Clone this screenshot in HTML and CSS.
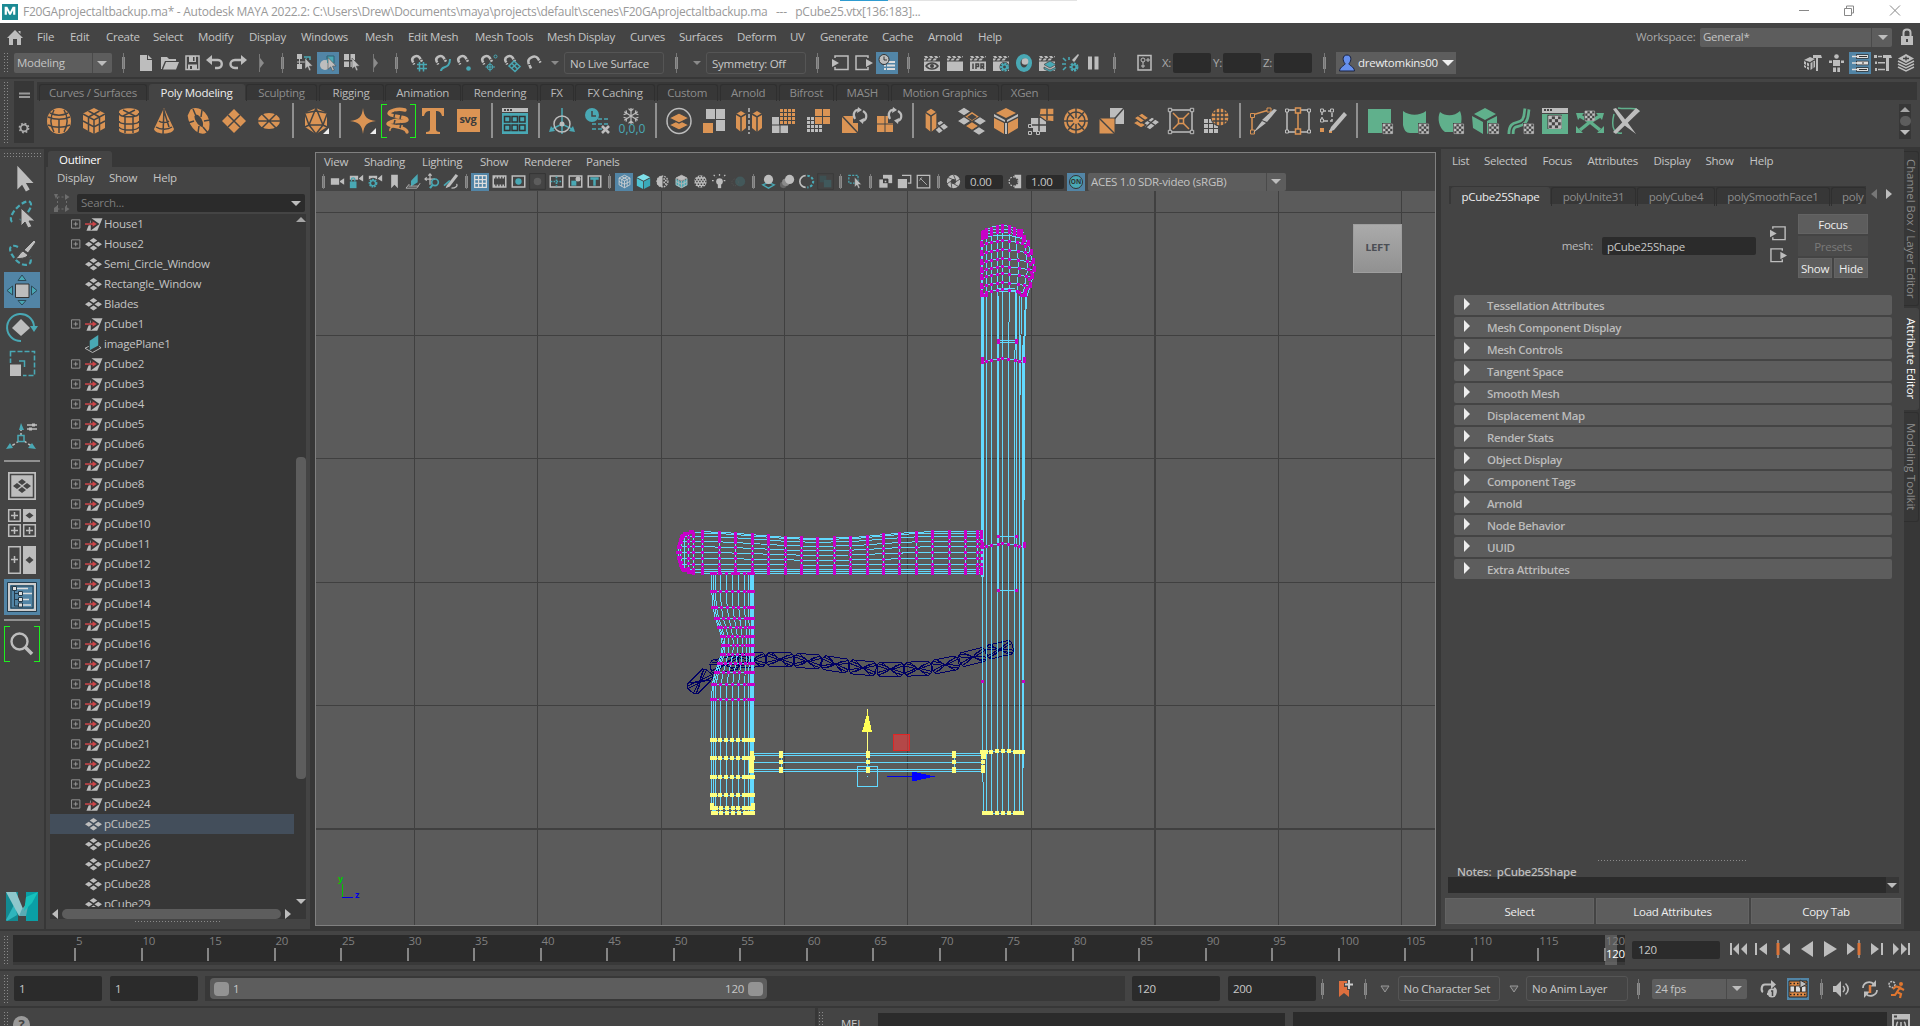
FILE: index.html
```html
<!DOCTYPE html>
<html lang="en">
<head>
<meta charset="utf-8">
<title>Autodesk MAYA 2022.2</title>
<link rel="stylesheet" href="styles.css">
</head>
<body>
<header class="titlebar">
  <i data-icon="app" class="app-icon"></i>
  <span class="title">F20GAprojectaltbackup.ma* - Autodesk MAYA 2022.2: C:\Users\Drew\Documents\maya\projects\default\scenes\F20GAprojectaltbackup.ma&nbsp;&nbsp; ---&nbsp;&nbsp; pCube25.vtx[136:183]...</span>
  <div class="progress"></div>
  <div class="winbtns"><i data-icon="min"></i><i data-icon="restore"></i><i data-icon="close"></i></div>
</header>

<nav class="menubar">
  <i data-icon="home"></i>
  <span>File</span><span>Edit</span><span>Create</span><span>Select</span><span>Modify</span><span>Display</span><span>Windows</span><span>Mesh</span><span>Edit Mesh</span><span>Mesh Tools</span><span>Mesh Display</span><span>Curves</span><span>Surfaces</span><span>Deform</span><span>UV</span><span>Generate</span><span>Cache</span><span>Arnold</span><span>Help</span>
  <span class="dim">Workspace:</span>
  <div class="combo ws"><span>General*</span><b class="down"></b></div>
  <i data-icon="lock"></i>
</nav>

<div class="status">
  <b class="grip"></b>
  <div class="combo modeling"><span>Modeling</span><b class="down"></b></div>
  <b class="sep"></b>
  <i data-icon="newf"></i><i data-icon="open"></i><i data-icon="save"></i><i data-icon="undo"></i><i data-icon="redo"></i>
  <i data-icon="chev"></i><b class="sep"></b>
  <i data-icon="selh"></i><i data-icon="selo" class="on"></i><i data-icon="selc"></i>
  <i data-icon="chev"></i><b class="sep"></b>
  <i data-icon="mag1"></i><i data-icon="mag2"></i><i data-icon="mag3"></i><i data-icon="mag4"></i><i data-icon="mag5"></i><i data-icon="mag6"></i>
  <b class="down small"></b>
  <div class="outbox">No Live Surface</div>
  <b class="sep"></b><b class="down small"></b>
  <div class="outbox">Symmetry: Off</div>
  <b class="sep"></b>
  <i data-icon="inp"></i><i data-icon="outp"></i><i data-icon="hist" class="on"></i>
  <b class="sep"></b>
  <i data-icon="r1"></i><i data-icon="r2"></i><i data-icon="r3"></i><i data-icon="r4"></i><i data-icon="r5"></i><i data-icon="r6"></i><i data-icon="r7"></i><i data-icon="pause"></i>
  <b class="sep"></b>
  <i data-icon="xyz"></i>
  <span class="dim">X:</span><div class="field num"></div><span class="dim">Y:</span><div class="field num"></div><span class="dim">Z:</span><div class="field num"></div>
  <b class="sep"></b>
  <div class="user"><i data-icon="user"></i><span>drewtomkins00</span><b class="down white"></b></div>
  <i data-icon="p1"></i><i data-icon="p2"></i><i data-icon="p3" class="on"></i><i data-icon="p4"></i><i data-icon="p5"></i>
</div>

<section class="shelf">
  <b class="grip tall"></b>
  <div class="shelf-side"><i data-icon="burger"></i><i data-icon="cog"></i></div>
  <div class="shelf-main">
    <div class="tabs shelf-tabs">
      <span>Curves / Surfaces</span><span class="active">Poly Modeling</span><span>Sculpting</span><span class="lit">Rigging</span><span class="lit">Animation</span><span class="lit">Rendering</span><span class="lit">FX</span><span class="lit">FX Caching</span><span>Custom</span><span>Arnold</span><span>Bifrost</span><span>MASH</span><span>Motion Graphics</span><span>XGen</span>
    </div>
    <div class="shelf-icons">
      <i data-icon="sphere"></i><i data-icon="cube"></i><i data-icon="cyl"></i><i data-icon="cone"></i><i data-icon="torus"></i><i data-icon="plane"></i><i data-icon="disc"></i><hr>
      <i data-icon="plat"></i><hr>
      <i data-icon="star"></i><i data-icon="helix" class="bracket"></i><i data-icon="type"></i><div class="svgtile"><span>svg</span></div><hr>
      <i data-icon="content"></i><hr>
      <i data-icon="locator"></i><i data-icon="delhist"></i><div class="freeze"><i data-icon="snow"></i><span>0,0,0</span></div><hr>
      <i data-icon="boolean"></i><i data-icon="combine"></i><i data-icon="mirror"></i><i data-icon="smooth"></i><i data-icon="reduce"></i><i data-icon="rot1"></i><i data-icon="rot2"></i><hr>
      <i data-icon="extrude"></i><i data-icon="bridge"></i><i data-icon="bevel"></i><i data-icon="merge"></i><i data-icon="circ"></i><i data-icon="flip"></i><i data-icon="dup"></i><i data-icon="poke"></i><i data-icon="sphproj"></i><hr>
      <i data-icon="cut"></i><i data-icon="loop"></i><i data-icon="quad"></i><hr>
      <i data-icon="uv1"></i><i data-icon="uv2"></i><i data-icon="uv3"></i><i data-icon="uv4"></i><i data-icon="uv5"></i><i data-icon="uv6"></i><i data-icon="uv7"></i><i data-icon="uv8"></i>
    </div>
  </div>
  <div class="shelf-scroll"><b class="up"></b><u></u><b class="down"></b></div>
</section>

<main>
  <aside class="toolbox">
    <b class="griph"></b>
    <i data-icon="tsel"></i><i data-icon="tlasso"></i><i data-icon="tpaint"></i><i data-icon="tmove" class="on"></i><i data-icon="trot"></i><i data-icon="tscale"></i>
    <b></b><i data-icon="tman"></i><hr>
    <i data-icon="lay1"></i><i data-icon="lay4"></i><i data-icon="lay2"></i><i data-icon="layo" class="on"></i><hr>
    <i data-icon="tsearch" class="bracket"></i><b></b><i data-icon="maya"></i>
  </aside>

  <section class="outliner">
    <div class="otab">Outliner</div>
    <div class="obody">
      <div class="omenu"><span>Display</span><span>Show</span><span>Help</span></div>
      <div class="osearch"><i data-icon="frame"></i><div class="field"><span>Search...</span><b class="down"></b></div></div>
      <div class="olist">
        <div class="rows" id="rows"></div>
        <div class="vscroll"><b class="up"></b><u></u><b class="down"></b></div>
        <div class="hscroll"><b class="left"></b><u></u><b class="right"></b></div>
      </div>
      <div class="dots"></div>
    </div>
  </section>

  <section class="view">
    <div class="vmenu"><span>View</span><span>Shading</span><span>Lighting</span><span>Show</span><span>Renderer</span><span>Panels</span></div>
    <div class="vbar">
      <b class="sep"></b><i data-icon="v1"></i><i data-icon="v2"></i><i data-icon="v3"></i><i data-icon="v4"></i><i data-icon="v5"></i><i data-icon="v6"></i><i data-icon="v7"></i>
      <b class="sep"></b><i data-icon="v8" class="on"></i><i data-icon="v9"></i><i data-icon="v10"></i><i data-icon="v11"></i><i data-icon="v12"></i><i data-icon="v13"></i><i data-icon="v14"></i>
      <b class="sep wide"></b><i data-icon="v15" class="on"></i><i data-icon="v16"></i><i data-icon="v17"></i><i data-icon="v18"></i><i data-icon="v19"></i><i data-icon="v20"></i><i data-icon="v21"></i>
      <b class="sep wide"></b><i data-icon="v22"></i><i data-icon="v23"></i><i data-icon="v24"></i><i data-icon="v25"></i>
      <b class="sep wide"></b><i data-icon="v26"></i><b class="sep wide"></b><i data-icon="v27"></i><i data-icon="v28"></i><i data-icon="v29"></i>
      <b class="sep wide"></b><i data-icon="v30"></i><div class="field">0.00</div><i data-icon="v31"></i><div class="field">1.00</div>
      <div class="onbtn"><span>ON</span></div>
      <div class="combo cs"><span>ACES 1.0 SDR-video (sRGB)</span><b class="down"></b></div>
    </div>
    <div class="canvas">
      <svg id="scene" viewBox="316 191 1119 734" width="1119" height="734"></svg>
      <div class="viewcube">LEFT</div>
    </div>
  </section>

  <section class="attr">
    <div class="amenu"><span>List</span><span>Selected</span><span>Focus</span><span>Attributes</span><span>Display</span><span>Show</span><span>Help</span></div>
    <div class="atabrow">
      <div class="tabs atabs"><span class="active">pCube25Shape</span><span>polyUnite31</span><span>polyCube4</span><span>polySmoothFace1</span><span class="cut">poly</span></div>
      <b class="left faint"></b><b class="right"></b>
    </div>
    <div class="ahead">
      <label>mesh:</label><div class="field">pCube25Shape</div>
      <div class="io"><i data-icon="inp"></i><i data-icon="outp"></i></div>
      <div class="abtns"><button>Focus</button><button class="off">Presets</button><button>Show</button><button>Hide</button></div>
    </div>
    <div class="sections">
      <div>Tessellation Attributes</div><div>Mesh Component Display</div><div>Mesh Controls</div><div>Tangent Space</div><div>Smooth Mesh</div><div>Displacement Map</div><div>Render Stats</div><div>Object Display</div><div>Component Tags</div><div>Arnold</div><div>Node Behavior</div><div>UUID</div><div>Extra Attributes</div>
    </div>
    <div class="notes">
      <div class="dots"></div>
      <div class="nlabel">Notes:&nbsp; pCube25Shape</div>
      <div class="nfield"><b class="down"></b></div>
      <div class="nbtns"><button>Select</button><button>Load Attributes</button><button>Copy Tab</button></div>
    </div>
  </section>
  <aside class="vtabs"><span class="t1">Channel Box / Layer Editor</span><span class="t2 active">Attribute Editor</span><span class="t3">Modeling Toolkit</span></aside>
</main>

<section class="timeline">
  <b class="grip"></b>
  <div class="ruler" id="ruler"></div>
  <div class="field frame">120</div>
  <div class="play"><i data-icon="k1"></i><i data-icon="k2"></i><i data-icon="k3"></i><i data-icon="k4"></i><i data-icon="k5"></i><i data-icon="k6"></i><i data-icon="k7"></i><i data-icon="k8"></i></div>
</section>

<section class="range">
  <b class="grip"></b>
  <div class="field">1</div><div class="field">1</div>
  <div class="track"><div class="thumb"><u></u><span>1</span><span>120</span><u></u></div></div>
  <div class="field">120</div><div class="field">200</div>
  <b class="sep"></b><i data-icon="bookmark"></i><b class="sep"></b>
  <i data-icon="tri"></i><div class="outbox">No Character Set</div>
  <i data-icon="tri"></i><div class="outbox">No Anim Layer</div>
  <b class="sep"></b>
  <div class="combo fps"><span>24 fps</span><b class="down"></b></div>
  <i data-icon="once"></i><i data-icon="film" class="on"></i><b class="sep"></b>
  <i data-icon="speaker"></i><i data-icon="refresh"></i><i data-icon="runner"></i>
</section>

<footer class="cmd">
  <b class="grip"></b><i class="help">?</i><div class="helpline"></div>
  <b class="grip"></b><span>MEL</span><div class="mel"></div><div class="mel result"></div><i data-icon="script"></i>
</footer>
<script src="app.js"></script>
</body>
</html>
```

FILE: styles.css
```css
* { box-sizing: border-box; }
body {
  margin: 0; width: 1920px; height: 1026px; overflow: hidden;
  display: flex; flex-direction: column;
  background: #444; color: #c4c4c4;
  font: 11.5px/16px "Open Sans", "Noto Sans", sans-serif; letter-spacing: -0.27px;
  white-space: nowrap;
}
i { display: block; font-style: normal; }
b, u { display: block; text-decoration: none; }
svg { display: block; }
button { font: inherit; letter-spacing: inherit; color: #eee; background: #5d5d5d; border: 1px solid #636363; padding: 1px 0 0; text-align: center; }

/* icon palette: fills and strokes */
.g { fill: #bdbdbd; } .o { fill: #db9454; } .t { fill: #49a8b4; } .n { fill: #60b08c; } .d { fill: #444; } .w { fill: #eee; }
.G, .O, .T, .N, .D { fill: none; stroke-width: 1.5; }
.G { stroke: #bdbdbd; } .O { stroke: #db9454; } .T { stroke: #49a8b4; } .N { stroke: #60b08c; } .D { stroke: #444; }
.thick { stroke-width: 2.6; } .thin { stroke-width: 1; }

.down, .up, .left, .right { width: 0; height: 0; border: 0 solid transparent; flex: none; }
.down { border-width: 5px 5px 0; border-top-color: #bdbdbd; }
.down.small { border-width: 4px 4px 0; border-top-color: #8a8a8a; justify-self: center; margin-right: 3px; }
.down.white { border-width: 6px 6px 0; border-top-color: #eee; }
.up { border-width: 0 5px 5px; border-bottom-color: #a5a5a5; }
.left { border-width: 5px 6px 5px 0; border-right-color: #bdbdbd; }
.left.faint { border-right-color: #777; }
.right { border-width: 5px 0 5px 6px; border-left-color: #bdbdbd; }
.on { background: #5285a6; }
.dim { color: #aaa; }
.grip { width: 5px; height: 22px; background: radial-gradient(circle, #8a8a8a 0.6px, transparent 0.9px) 0 0 / 3px 3px; }
.sep { width: 4px; height: 20px; background: linear-gradient(#777, #777) center / 1px 100% no-repeat, linear-gradient(#8b8b8b, #8b8b8b) center / 3px 12px no-repeat; }
.field { background: #2b2b2b; border-radius: 2px; color: #c8c8c8; }
.outbox { border: 1px solid #555; border-radius: 3px; width: 100px; height: 22px; line-height: 21px; padding-left: 5px; color: #c8c8c8; }
.combo { background: #5d5d5d; border-radius: 2px; display: flex; align-items: center; justify-content: space-between; padding: 0 5px 0 3px; }
.dots { height: 1px; background: repeating-linear-gradient(90deg, #8a8a8a 0 1px, transparent 1px 3px); }

.titlebar { height: 23px; background: #fff; display: grid; grid-template-columns: 20px 817px 240px 1fr auto; position: relative; flex: none; }
.app-icon { width: 14px; margin: 4px 0 0 2px; }
.title { font: 12px/23px "Open Sans", sans-serif; color: #999; letter-spacing: -0.27px; padding-left: 3px; }
.progress { height: 1px; margin-left: 3px; background: linear-gradient(90deg, #2e9bd0 48px, #e3e3e3 48px); }
.winbtns { grid-column: 5; display: grid; grid-template-columns: 46px 45px 29px; padding: 4px 0 0; width: 124px; }

.menubar { height: 28px; display: grid; align-items: center; flex: none; padding-left: 6px;
  grid-template-columns: 31px 33px 36px 47px 45px 51px 52px 64px 43px 67px 72px 83px 49px 58px 53px 30px 62px 46px 50px 658px 64px 199px 20px; }
.menubar > .combo { width: 192px; height: 19px; padding-right: 4px; background: linear-gradient(90deg, transparent 171px, #4a4a4a 171px 172px, transparent 172px) #5d5d5d; }

.status { height: 26px; display: grid; align-items: center; flex: none; padding: 0 0 2px 3px;
  grid-template-columns: 11px 107px 17px 23px 23px 22px 23px 28px 23px 16px 21px 26px 28px 23px 16px 24px 22px 24px 23px 23px 23px 15px 110px 17px 15px 109px 17px 23px 21px 30px 17px 23px 23px 23px 23px 23px 24px 22px 28px 24px 26px 11px 40px 10px 40px 11px 48px 14px 468px 24px 21px 25px 23px 20px; }
.status .on, .range .on { width: 22px; height: 22px; padding: 2px; }
.status .num { width: 38px; height: 20px; }
.modeling { width: 98px; height: 20px; background: linear-gradient(90deg, transparent 78px, #4a4a4a 78px 79px, transparent 79px) #5d5d5d; }
.user { width: 120px; height: 22px; background: #5d5d5d; color: #eee; display: flex; align-items: center; padding: 0 2px; gap: 2px; }
.user .down { margin-left: auto; }

.shelf { height: 72px; border-top: 2px solid #373737; border-bottom: 2px solid #373737; display: flex; flex: none; padding-left: 3px; }
.tall { height: 62px; margin: 2px 6px 0 0; }
.shelf-side { width: 20px; height: 62px; margin-top: 2px; background: #373737; display: flex; flex-direction: column; justify-content: space-between; padding: 6px 1px 6px; }
.shelf-main { margin-left: 3px; width: 1843px; }
.tabs { display: flex; background: #373737; gap: 2px; }
.tabs span { border: 1px solid #2f2f2f; border-bottom: 0; border-radius: 3px 3px 0 0; color: #8c8c8c; text-align: center; }
.tabs .active { background: #444; color: #eee; border-color: #444; }
.tabs .lit { color: #b9b9b9; }
.shelf-tabs { margin-top: 3px; height: 18px; padding: 2px 0 0 2px; display: grid; gap: 0 1.5px; width: 1880px;
  grid-template-columns: 108px 96px 71px 65px 75.5px 76px 34px 80px 61.5px 57.5px 55.5px 53.5px 108.5px 48px; }
.shelf-icons { display: flex; height: 41px; align-items: center; padding-left: 4.5px; }
.shelf-icons > * { flex: none; width: 35px; }
.shelf-icons > i { padding: 0 4.5px; }
.shelf-icons hr { width: 2px; height: 35px; margin: 0 5px; border: 0; background: #909090; }
.bracket { --c: #1df01d; background:
  linear-gradient(var(--c), var(--c)) 0 0 / 6px 1px, linear-gradient(var(--c), var(--c)) 0 100% / 6px 1px,
  linear-gradient(var(--c), var(--c)) 100% 0 / 6px 1px, linear-gradient(var(--c), var(--c)) 100% 100% / 6px 1px,
  linear-gradient(var(--c), var(--c)) 0 0 / 1px 100%, linear-gradient(var(--c), var(--c)) 100% 0 / 1px 100%;
  background-repeat: no-repeat; }
.shelf-icons .bracket { height: 34px; display: flex; align-items: center; }
.svgtile span { display: block; width: 23px; height: 23px; margin: auto; background: #db9454; color: #3c3c3c; font-weight: 700; font-size: 11px; line-height: 20px; text-align: center; }
.freeze { display: flex; flex-direction: column; align-items: center; }
.freeze i { width: 18px; }
.freeze span { color: #49a8b4; font-size: 12px; line-height: 10px; letter-spacing: 0; }
.shelf-scroll { margin: 25px 0 0 19px; width: 12px; height: 35px; background: #373737; display: flex; flex-direction: column; align-items: center; justify-content: space-between; padding: 3px 0 4px; }
.shelf-scroll u { width: 11px; height: 10px; border-radius: 5px; background: #5d5d5d; }

main { height: 780px; display: grid; grid-template-columns: 44px 2px 264px 3px 1126px 2px 463px 16px; background: #373737; flex: none; }
main > section, .toolbox { background: #444; }
.toolbox { grid-column: 1; display: grid; justify-items: center; align-items: center;
  grid-template-rows: 11px repeat(6, 37px) 35px 37px 13px repeat(4, 37px) 10px 38px 1fr 38px 3px; }
.toolbox i { width: 36px; height: 36px; }
.toolbox hr { width: 36px; height: 2px; border: 0; margin: 0; background: #909090; }
.griph { width: 38px; height: 5px; background: radial-gradient(circle, #8a8a8a 0.6px, transparent 0.9px) 0 0 / 3px 3px; }

main > .outliner { grid-column: 3; background: #373737; padding-top: 2px; }
.otab { width: 64px; height: 16px; margin-left: 2px; background: #444; color: #fff; padding-left: 11px; border-radius: 3px 3px 0 0; line-height: 18px; }
.obody { background: #444; height: 762px; padding-left: 4px; display: flex; flex-direction: column; }
.omenu { display: grid; grid-template-columns: 52px 44px 40px; padding: 3px 0 0 7px; height: 27px; }
.osearch { display: flex; gap: 6px; height: 20px; padding-left: 3px; }
.osearch i { width: 18px; }
.osearch .field { width: 228px; height: 18px; display: flex; align-items: center; justify-content: space-between; padding: 0 4px; color: #7d7d7d; line-height: 18px; }
.olist { width: 256px; height: 705px; background: #373737; display: grid; grid-template: 693px 12px / 246px 10px; letter-spacing: -0.22px; }
.rows { overflow: hidden; width: 244px; }
.row { height: 20px; display: grid; grid-template-columns: 14px 18px 1fr; padding-left: 21px; align-items: center; column-gap: 0; line-height: 20px; }
.row .name { padding-left: 1px; }
.row.sel { background: #434e5b; }
.vscroll { display: flex; flex-direction: column; align-items: center; padding: 3px 0; }
.vscroll u { width: 10px; height: 322px; margin: 235px 0 auto; border-radius: 4px; background: #5d5d5d; }
.hscroll { display: flex; align-items: center; padding-left: 2px; gap: 4px; height: 10px; margin-top: 2px; }
.hscroll u { width: 219px; height: 10px; border-radius: 5px; background: #5d5d5d; }
.obody > .dots { width: 86px; margin: 2px 0 0 85px; flex: none; }

main > .view { grid-column: 5; margin: 3px 3px 3px 2px; border: 1px solid #808080; display: flex; flex-direction: column; }
.vmenu { height: 19px; padding: 1px 0 0 8px; display: grid; grid-template-columns: 40px 58px 58px 44px 62px 50px; }
.vbar { height: 19px; display: flex; align-items: center; padding-left: 2px; }
.vbar > i { width: 19px; height: 18px; padding: 1.5px 2px; flex: none; }
.vbar > .on { width: 18px; margin-right: 1px; }
.vbar .sep { height: 15px; margin: 0 3px; flex: none; }
.vbar .wide { margin: 0 4px 0 3px; }
.vbar .field { width: 38px; height: 14px; line-height: 14px; padding-left: 5px; margin: 0 2px; }
.onbtn { width: 18px; height: 18px; margin: 0 3px 0 1px; background: #5285a6; padding: 2px; }
.onbtn span { display: block; width: 14px; height: 14px; border-radius: 50%; background: #49a8b4; border: 1px solid #333; font-size: 6.5px; font-weight: 700; line-height: 12px; color: #333; text-align: center; letter-spacing: 0; }
.cs { width: 198px; height: 18px; background: linear-gradient(90deg, transparent 178px, #4a4a4a 178px 179px, transparent 179px) #5d5d5d; }
.canvas { position: relative; background: #5b5b5b; height: 734px; }
.viewcube { position: absolute; left: 1037px; top: 33px; width: 49px; height: 49px; background: linear-gradient(#aaa, #919191); border: 1px solid #9e9e9e; color: #4c4f55; font: 700 9px/47px "DejaVu Sans", sans-serif; text-align: center; letter-spacing: 0; }

.attr { grid-column: 7; display: flex; flex-direction: column; }
.amenu { height: 37px; padding: 4px 0 0 11px; display: grid; grid-template-columns: 32px 58.5px 45px 66px 52px 44px 40px; }
.atabrow { display: flex; align-items: center; padding-left: 8px; height: 18px; }
.atabs { width: 417px; height: 18px; padding: 1px 0 0 2px; display: grid; gap: 0 1px; grid-template-columns: 99px 85px 78px 114px 35px; line-height: 18px; }
.atabs .cut { border-right: 0; text-align: left; padding-left: 10px; }
.atabrow .left { margin: -3px 9px 0 5px; } .atabrow .right { margin-top: -3px; }
.ahead { display: grid; grid-template-columns: 152px 9px 154px 14px 16px 12px 70px; height: 64px; margin-top: 10px; align-items: center; }
.ahead label { text-align: right; color: #bbb; }
.ahead .field { grid-column: 3; height: 18px; line-height: 19px; padding-left: 5px; }
.io { grid-column: 5; display: flex; flex-direction: column; gap: 5px; margin-top: -3px; }
.abtns { grid-column: 7; display: grid; grid-template: repeat(3, 20px) / 34px 34px; gap: 2px; }
.abtns button:nth-child(-n+2) { grid-column: span 2; }
.abtns .off { background: #4b4b4b; border-color: #4b4b4b; color: #7a7a7a; }
.sections { margin: 17px 0 0 13px; width: 438px; display: flex; flex-direction: column; gap: 2px; font-weight: 600; color: #bbb; }
.sections div { height: 20px; background: #5d5d5d; border-radius: 2px; line-height: 18px; padding-top: 2px; display: flex; align-items: center; letter-spacing: -0.35px; }
.sections div::before { content: ""; margin: -4px 17px 0 10px; border: 6px solid transparent; border-left-color: #eee; border-right: 0; }
.notes { margin-top: auto; padding: 0 3px 5px 4px; }
.notes .dots { width: 149px; margin-left: 153px; }
.nlabel { font-weight: 600; padding: 2px 0 0 12px; height: 16px; color: #bbb; line-height: 17px; }
.nfield { width: 451px; height: 16px; margin-left: 3px; background: linear-gradient(90deg, #2b2b2b 438px, #373737 438px); display: flex; align-items: center; justify-content: flex-end; padding-right: 2px; }
.nbtns { margin-top: 5px; display: grid; grid-template-columns: 149px 153px 150px; gap: 2px; height: 26px; }

.vtabs { grid-column: 8; padding-top: 2px; display: flex; flex-direction: column; gap: 2px; }
.vtabs span { writing-mode: vertical-rl; width: 15px; line-height: 14px; border: 1px solid #2f2f2f; border-left: 0; border-radius: 0 3px 3px 0; color: #8c8c8c; text-align: center; letter-spacing: -0.1px; }
.t1 { height: 155px; } .t2 { height: 102px; } .t3 { height: 110px; }
.vtabs .active { background: #444; color: #fff; border-color: #444; }

.timeline { height: 40px; border-top: 2px solid #373737; display: flex; padding-left: 3px; flex: none; }
.timeline .grip { height: 31px; margin: 4px 5px 0 0; }
.ruler { margin-top: 4px; width: 1612px; height: 30px; background: linear-gradient(#2b2b2b 27px, #393939 27px); padding-left: 61px; display: flex; color: #7f7f7f; position: relative; }
.tick { flex: 0 0 66.52px; padding-left: 2px; line-height: 11px; background: linear-gradient(#858585, #858585) 0 13px / 2px 13px no-repeat; }
.tick.last { flex-basis: 20px; }
.now { position: absolute; left: 1592px; top: 0; width: 12px; height: 30px; padding: 13px 0 0 1px; background: rgba(130, 130, 130, .55); color: #fff; line-height: 11px; }
.frame { width: 88px; height: 18px; margin: 10px 0 0 7px; padding: 1px 0 0 6px; }
.play { display: grid; margin: 9px 0 0 10px; grid-template-columns: 24px 22px 24px 23px 24px 23px 23px 20px; }

.range { height: 37px; border-top: 2px solid #373737; display: grid; align-items: center; flex: none; padding-left: 3px;
  grid-template-columns: 11px 96px 95px 927px 96px 92px 17px 26px 16px 18.5px 110px 18.5px 110px 16px 108px 27px 32px 13px 29px 27px 20px; }
.range > .field { width: 88px; height: 25px; line-height: 25px; padding-left: 5px; }
.range .grip { height: 29px; }
.track { width: 920px; height: 25px; background: #383838; padding: 2px 0 0 5px; }
.thumb { width: 557px; height: 21px; border-radius: 4px; background: #5d5d5d; display: grid; grid-template-columns: 15px 1fr auto 15px; column-gap: 4px; padding: 0 4px; align-items: center; color: #c8c8c8; }
.thumb u { width: 15px; height: 14px; border-radius: 4px; background: #939393; }
.fps { width: 95px; height: 20px; background: linear-gradient(90deg, transparent 74px, #4a4a4a 74px 75px, transparent 75px) #5d5d5d; }
.range .outbox { width: 102px; height: 25px; line-height: 23px; }

.cmd { border-top: 2px solid #373737; display: grid; grid-template-columns: 10px 17px 788px 12px 36px 419px 602px 30px; padding-left: 3px; flex: none; height: 20px; }
.cmd .grip { margin-top: 3px; }
.help { width: 17px; height: 17px; margin-top: 8px; border-radius: 50%; background: #9a9a9a; color: #444; font-weight: 700; font-size: 13px; line-height: 16px; text-align: center; }
.helpline { border-right: 3px solid #373737; height: 20px; }
.cmd > span { padding: 9px 0 0 11px; line-height: 14px; color: #c8c8c8; }
.mel { margin: 5px 0 0 12px; height: 20px; background: #2b2b2b; }
.mel.result { margin: 4px 0 0 8px; }
.cmd > i:last-child { width: 20px; margin: 6px 0 0 5px; }
```

FILE: app.js
```js
// Small icons, drawn on an 18px grid.
const arrowCursor = 'M0 0 L0 13 L3 10.4 L5 15 L7 14 L5 9.6 L9 9.4Z';
const cursor = (x, y, s = 1) => `<path class="g" stroke="#444" stroke-width=".6" transform="translate(${x} ${y}) scale(${s})" d="${arrowCursor}"/>`;
const magnet = '<path class="G thick" d="M4.2 10.5 L2.6 7.2 C0.8 3 7 .2 9.5 3.6 L12 7.6"/><path class="D thin" d="M2 9.6 L5.6 8 M9.4 6.4 L12.6 4.6"/>';
const clap = (x = '') => `<path class="g" d="M1 7.5H17V17H1Z"/><path class="g" d="M1 2h3l1.5 2h-3ZM6 2h3l1.5 2h-3ZM11 2h3l1.5 2h-3ZM1 4.5h3l-1 2H1ZM6 4.5h3l-1.5 2h-3ZM11 4.5h3l-1.5 2h-3ZM16 2h1v2Z"/>${x}`;
const cog = (x, y, r) => `<circle cx="${x}" cy="${y}" r="${r}" class="T thick" stroke-dasharray="2 .9"/><circle cx="${x}" cy="${y}" r="${r - 1}" class="T"/>`;
const cam = '<path class="g" d="M1 5H11V13H1ZM12 8.5L17 5V13L12 9.5Z"/>';
const camS = '<path class="g" d="M1 2H11V7H1ZM12 5L17 1V9L12 6Z"/>';
const boxed = x => `<path class="G" d="M1.5 2.5H16.5V15.5H1.5Z" style="stroke-width:1.8"/>${x}`;
const wire = s => `<path fill="none" stroke="${s}" d="M9 1.5L15.5 4.8V13L9 16.5L2.5 13V4.8ZM2.5 4.8L9 8.2L15.5 4.8M9 8.2V16.5M5.7 3.2L12.2 6.5V14.8M12.2 3.2L5.7 6.5V14.8M2.5 9L9 12.3L15.5 9"/>`;
const cubeSolid = (a, b) => `<path class="${a}" d="M9 1.5L15.5 4.6L9 7.8L2.5 4.6Z"/><path class="${b}" d="M2 5.8L8.4 9V16.8L2 13.5ZM16 5.8L9.6 9V16.8L16 13.5Z"/>`;

const SMALL = {
  app: '<path fill="#1b8a94" d="M0 0H18V18H0Z"/><path fill="#fff" d="M3 3H6L9 9L12 3H15V12H12.5V7L10 12H8L5.5 7V12H3Z"/>',
  min: '<path d="M3 6.5H13" stroke="#888" fill="none"/>',
  restore: '<path d="M2.5 4.5h7v7h-7zM4.500 4.5v-2.500h7v7h-2" stroke="#888" fill="none"/>',
  close: '<path d="M3 1.5L13 11.5M13 1.5L3 11.5" stroke="#888" fill="none"/>',
  home: '<path class="g" d="M9 2L17 10H15V17H11V11H7V17H3V10H1ZM12.5 3h2v3l-2-2Z"/>',
  lock: '<path class="g" d="M2 8H14V17H2Z"/><path class="G" style="stroke-width:2" d="M4.5 8V4.5C4.5 .4 11.5 .4 11.5 4.5V8"/><path class="d" d="M7 11h2v3H7z"/>',
  newf: '<path class="g" d="M2 1H9V6H14V17H2Z"/><path class="g" d="M10 1L14 5H10Z"/>',
  open: '<path class="g" d="M0 3H6L8 5H15V7H4L1 14V15H0ZM5 8H18L15 15.5H2Z"/>',
  save: '<path class="G" d="M2 2H15V15.5H2Z"/><path class="g" d="M5 2H12V8H5ZM4 10.5H13V16H4Z"/><path class="d" d="M9 3h1.5v4H9zM6 12h2v3H6z"/>',
  undo: '<path class="G" style="stroke-width:2.4" d="M4 6H12C17 6 17 14 12 14H9"/><path class="g" d="M0 6L6 1V11Z"/>',
  redo: '<path class="G" style="stroke-width:2.4" d="M13 6H6C0 6 0 14 6 14H9"/><path class="g" d="M18 6L12 1V11Z"/>',
  chev: '<path d="M2.5 0V18" stroke="#777" /><path fill="#8b8b8b" d="M3 4L7 9L3 14Z"/>',
  selh: '<path class="g" d="M1 0H6V5H1ZM1 10H6V15H1Z"/><path class="G thin" d="M1 8H10M3.5 5V10"/><path class="T" d="M8 3H14V6M10 7V4"/>' + cursor(9, 4, .85),
  selo: '<circle cx="6" cy="11" r="5" class="g"/><path fill="#49a8b4" d="M8 2H15V9H8Z"/><path fill="none" stroke="#2c5f70" d="M8 5V2H15V9"/>' + cursor(9, 3.5, .9),
  selc: '<path class="g" d="M1 0H6V6H1ZM7.5 0H12V6H7.5ZM1 7.5H6V13H1ZM7.5 7.5h4V13h-4Z"/>' + cursor(9, 4, .85),
  mag1: magnet + '<path class="T" d="M9.5 8V17.5M13.5 8V17.5M7 10.5H17M7 14.5H17"/>',
  mag2: magnet + '<path class="T" style="stroke-width:2" d="M7 17C7 11 16 16 16 5"/>',
  mag3: magnet + '<circle class="t" cx="12.5" cy="14.5" r="2.3"/>',
  mag4: magnet + '<circle class="T thin" cx="10" cy="13" r="2.8"/><path class="T thin" d="M10 8.5V17.5M5.5 13H15"/><circle cx="15.5" cy="2.5" r="1.5" class="T thin"/>',
  mag5: magnet + '<path class="T" d="M11 7L17 12.5L12 17.5L6 12ZM8.5 14.5L14 9.5M9 9.5L14.5 15"/>',
  mag6: '<path class="G thick" d="M5 14.5L2.6 9.2C0.8 4 9 .2 12 4.6L14.5 8.6"/><path class="D thin" d="M2 11L6 9.6M11.4 8L15 6"/>',
  inp: '<path class="G" d="M3 4V2H16V15.5H3V13"/><path class="g" d="M0 5L7 9L0 13Z"/>',
  outp: '<path class="G" d="M13 4V2H1V15.5H13V13"/><path class="g" d="M11 5L18 9L11 13Z"/>',
  hist: '<path d="M9 8h8M9 11.5h8M9 15h8M6 11.5h2M6 15h2" stroke="#ddd" stroke-width="2"/><circle cx="6" cy="5.5" r="5" class="g" stroke="#333"/><path d="M6 2.5V6H9" stroke="#333" fill="none"/>',
  r1: clap('<path class="D" d="M3 12C6 8 12 8 15 12C12 16 6 16 3 12Z"/><circle class="d" cx="9" cy="12" r="2"/>'),
  r2: clap(),
  r3: clap('<path class="D" d="M4 9.5V15M7 15V10H9.5V12.5H7M12 15V10H14.5V12.5H12M13 12.5L15 15"/>'),
  r4: clap('<circle cx="12.5" cy="13" r="5" class="d"/>' + cog(12.5, 13, 3.2)),
  r5: '<ellipse cx="9" cy="9" rx="5.800" ry="6.800" fill="none" stroke="#49a8b4" stroke-width="4.500"/><circle cx="10" cy="7.500" r="3.3" class="g"/>',
  r6: clap('<path class="t" stroke="#444" stroke-width=".7" d="M12 7L18 10.5L12 14L6 10.5ZM6 13L12 16L18 13V15L12 18L6 15Z"/>'),
  r7: '<path class="g" d="M10 6L14 2L16 0L17 1L13 7L12 8Z"/><path class="T thin" style="stroke-width:1.6" d="M1 4L4 7M0 10H4M1 16L4 13M7 3V6"/>' + cog(12, 13, 3.2),
  pause: '<path class="g" d="M4 2.5H8V15.5H4ZM10.5 2.5H14.5V15.5H10.5Z"/>',
  xyz: '<path class="G" d="M2 1.5H15V16H2Z"/><circle cx="7" cy="6" r="2" class="G thin"/><path class="G thin" d="M7 8V14M5 12H9M10 6H14M12 4V8"/>',
  user: '<path fill="#6690ee" stroke="#1a2240" d="M9 1C14 1 13.5 7 11 9.5C11 12 16 12 16.500 17H1.500C2 12 7 12 7 9.500C4.500 7 4 1 9 1Z"/>',
  p1: '<path class="g" d="M0 6L6 3L11 5L6 8ZM0 7L5 9.500V16L0 13ZM6.500 9L11 6.500V13L6.500 16ZM9 1H17L18 4H14V17H12V4H9Z"/><path class="D thin" d="M2.500 8V15M0 10.500L5 13M9 8V15"/>',
  p2: '<circle cx="8.500" cy="2.500" r="2.300" class="g"/><path class="g" d="M5 6H12V12H5ZM1 6.500H4V9H1ZM13 6.500H16V9H13ZM5 13.500H8V18H5ZM9.300 13.500H12V18H9.300Z"/>',
  p3: '<path stroke="#333" stroke-width="4.500" d="M5 2.500H17.500M5 9H17.500M5 15.500H17.500"/><path stroke="#ddd" stroke-width="1.500" d="M1 2.500H6M1 9H6M1 15.500H6"/><path stroke="#ddd" stroke-width="3" d="M6 2.500H17M6 9H17M6 15.500H17"/><path stroke="#333" stroke-width="1.200" d="M8 2.500H16M8 15.500H16M11 9H13"/>',
  p4: '<path class="g" d="M0 1H3V4H0ZM1 7.500H3V10H1ZM1 14H3V17H1ZM9 1H17L18 4H15V17H12V4H9Z"/><path class="G" d="M4 2.500H8M4 8.700H11M4 15.500H11"/>',
  p5: '<path class="g" d="M9 0L17 4.500L9 9L1 4.500Z"/><path class="G" d="M1 7L9 11L17 7M1 10L9 14L17 10M1 13L9 17L17 13"/><path class="D" d="M6 4.500H12M9 2.500V6.500"/>',
  burger: '<path d="M4 6.500H15M4 10H15" stroke="#999" stroke-width="2"/>',
  cog: '<circle cx="9" cy="9" r="3.400" fill="none" stroke="#aaa" stroke-width="1.800"/><circle cx="9" cy="9" r="4.600" fill="none" stroke="#aaa" stroke-width="1.600" stroke-dasharray="1.800 1.810"/>',
  frame: '<path fill="none" stroke="#6d6d6d" stroke-dasharray="2 2" d="M4.500 3H13M4.500 15H13M4.500 3V15M13.500 3V15"/><path fill="#6d6d6d" d="M1 0H5L3 5ZM12 0L16.500 3L12 6ZM12 12L16.500 15L12 18ZM1 14L5 11V18H1Z"/>',
  plus: '<path fill="none" stroke="#aaa" stroke-width="1.400" d="M1 1.500H16V16.500H1ZM8.500 5V13M4.500 9H12.500"/>',
  xform: '<path class="g" d="M7 2.500H18.500L13 15.500H1.500Z"/><path d="M0 8.500H8M7.500 4.500L13 8.500L7.500 12.500Z" fill="#373737" stroke="#373737" stroke-width="2.800"/><path d="M0 8.500H9" stroke="#cc4548" stroke-width="1.600"/><path fill="#cc4548" d="M8 5.500L12.500 8.500L8 11.500Z"/>',
  mesh: '<path class="g" d="M9 2L13 4.700L9 7.400L5 4.700ZM4 6L8 8.700L4 11.400L0 8.700ZM14 6L18 8.700L14 11.400L10 8.700ZM9 10L13 12.700L9 15.400L5 12.700Z"/>',
  image: '<path class="t" d="M5 5L14 -1V10L5 15Z"/><path class="G thin" d="M4 11L0 13L8 17.500L17 12.500L15 11"/>',
  tri: '<path fill="#555" stroke="#999" stroke-width="1" d="M2 6H10L6 12Z"/>',
  bookmark: '<path fill="#dd6f3e" d="M2 1H12V17L7 13L2 17Z"/><path d="M12 0V10M7 5H17" stroke="#444" stroke-width="4"/><path d="M12 0V9M8 4.500H16" stroke="#ccc" stroke-width="2"/>',
  once: '<path class="G" style="stroke-width:2.200" d="M12 4.500H5C1 4.500 1 11 3 12M14 8C17 10 16 14 13 14H7"/><path class="g" d="M11 0L16 4.500L11 9Z"/><circle cx="12" cy="13" r="4.500" class="g"/><path class="D" d="M11 11H12.500V16"/>',
  film: '<path fill="#e08a45" stroke="#222" d="M0 1H18V17H0Z"/><path stroke="#222" stroke-width="1.300" stroke-dasharray="1.500 2" d="M1 3.500H17M1 14.500H17"/><path fill="#ddd" stroke="#222" stroke-width=".8" d="M1 6H5.500V12H1ZM6.500 6H11.500V12H6.500ZM12.500 6H17V12H12.500Z"/><path class="g" stroke="#333" d="M11 0L18 4L11 8Z"/>',
  speaker: '<path class="g" d="M1 6H4L9 1V17L4 12H1Z"/><path class="G" d="M11 6C13 8 13 10 11 12M13.500 3.500C17 7 17 11 13.500 14.500"/>',
  refresh: '<path class="G" style="stroke-width:1.700" d="M2 8C2 3 8 0 13 4M16 10C16 15 9 18 5 14"/><path class="g" d="M15 0V6.500H9.500ZM3 18V11.500H9Z"/><path d="M9 5V13" stroke="#e07c3c" stroke-width="2.500"/>',
  runner: '<circle cx="4" cy="4.500" r="3" class="G" stroke-dasharray="2 1"/><circle cx="13" cy="4" r="2" fill="#e0762f"/><path fill="none" stroke="#e0762f" stroke-width="2.200" d="M5 9L8 6.500L12 7.500L9 12L13 14L12 18M9 12L7 15L3 15M12 8L16 10"/>',
  script: '<path class="g" d="M0 0H18V18H0Z"/><path class="d" d="M2 1.500h3v2H2zM2 5.500H16V18H2Z"/><path class="G" d="M6 8C4 9 5 12 4 13M12 8C14 9 13 12 14 13M9 8V13"/>',
  k1: '<path class="g" d="M0 3H2V15H0ZM9 3V15L3 9ZM17 3V15L11 9Z"/>',
  k2: '<path class="g" d="M1 3H3V15H1ZM13 3V15L5 9Z"/>',
  k3: '<path d="M2 0V18" stroke="#ccc"/><path fill="#dd7438" d="M.5 3H3.500V15H.5Z"/><path class="g" d="M14 3V15L6 9Z"/>',
  k4: '<path class="g" d="M13 1V17L1 9Z"/>',
  k5: '<path class="g" d="M1 1V17L14 9Z"/>',
  k6: '<path class="g" d="M0 3V15L8 9Z"/><path d="M12 0V18" stroke="#ccc"/><path fill="#dd7438" d="M10.500 3H13.500V15H10.500Z"/>',
  k7: '<path class="g" d="M1 3V15L9 9ZM11 3H13V15H11Z"/>',
  k8: '<path class="g" d="M0 3V15L6 9ZM8 3V15L14 9ZM15 3H17V15H15Z"/>',
  v1: cam,
  v2: camS + '<path class="t" d="M1 9H9V17H1Z"/><path class="T" d="M3 9V6C3 4 7 4 7 6V9"/>',
  v3: camS + '<circle cx="6" cy="11" r="6.500" class="d"/>' + cog(6, 11, 4),
  v4: '<path class="g" d="M5 1H13V17L9 13L5 17Z"/>',
  v5: '<path class="t" d="M6 8L14 0V10L6 15Z"/><path class="G thin" d="M4 12L0 17H13L17 11M3 14.500H15"/>',
  v6: '<path class="G" d="M6 0V13M0 6H12M4 2L6 0L8 2M2 4L0 6L2 8"/><circle cx="12" cy="10" r="4" class="T" style="stroke-width:2"/><path class="T thick" d="M9 13L6 17"/>',
  v7: '<path class="g" d="M3 14L14 0L17 2L7 15L2 17Z"/><path class="T" style="stroke-width:2" d="M0 14L7 8"/><path class="G" d="M9 17C14 17 17 14 15 12"/>',
  v8: '<path fill="none" stroke="#ddd" stroke-width="1.500" d="M2 2H16V16H2ZM6.700 2V16M11.300 2V16M2 6.700H16M2 11.300H16"/>',
  v9: boxed('<path stroke="#bdbdbd" stroke-width="3" stroke-dasharray="2 1.500" d="M2 4H16M2 14H16"/>'),
  v10: boxed('<circle cx="9" cy="9" r="3.800" class="t"/>'),
  v11: '<path fill="none" stroke="#333" d="M-.500 -.500H18.500V18.500H-.500Z"/><circle cx="9" cy="9" r="4.500" fill="#5d5d5d"/>',
  v12: boxed('<path class="T" stroke-dasharray="2 1.500" style="stroke-width:2" d="M9 3V15M2 9H16"/>'),
  v13: boxed('<path class="t" d="M4 8H10V14H4Z"/><circle cx="12" cy="6" r="3" class="g"/>'),
  v14: boxed('<path class="t" d="M4 4H14V7H10.500V14H7.500V7H4Z"/>'),
  v15: wire('#d5d5d5'),
  v16: '<path fill="#7fe0ea" d="M9 0L17 4L9 8L1 4Z"/><path fill="#4fc3d2" d="M1 5L8.500 9V18L1 14Z"/><path fill="#3aa9b9" d="M17 5L9.500 9V18L17 14Z"/>',
  v17: '<path class="g" d="M9 2A7 7 0 0 0 9 16Z"/><circle cx="9" cy="9" r="6.500" class="G" stroke-dasharray="2 1.200"/><path class="g" d="M10 5h2v2h-2zM12 7h2v2h-2zM10 9h2v2h-2zM12 11h2v2h-2z"/>',
  v18: cubeSolid('g', 't') + wire('#bdbdbd'),
  v19: '<circle cx="9" cy="9" r="7.500" class="g"/><path stroke="#444" stroke-width="1.800" stroke-dasharray="1.800 1.800" d="M3.800 3H15M2 6.600H17M.200 9H17M2 12.200H17M3.800 15.200H15"/>',
  v20: '<circle cx="9" cy="9" r="4" class="g"/><path class="g" d="M7 12H11V17H7Z"/><path class="G" stroke-dasharray="2 2" d="M0 8H4M14 8H18M2 1L5 4M16 1L13 4M9 0V3"/>',
  v21: '<circle cx="11" cy="9" r="6" fill="#43585a"/><circle cx="5" cy="10" r="4" fill="none" stroke="#5b5b5b" stroke-dasharray="1 1.500"/>',
  v22: '<path class="T" d="M2 13L9 10L16 13L9 17Z"/><circle cx="9" cy="6.500" r="5.500" class="g"/>',
  v23: '<circle cx="4" cy="13" r="4" fill="#666"/><circle cx="7" cy="10" r="4.500" fill="#8b8b8b"/><circle cx="11.500" cy="6.500" r="5.500" class="g"/>',
  v24: '<path class="G" style="stroke-width:2" d="M8 2A7 7 0 0 0 8 16"/><path class="T" style="stroke-width:2.500" stroke-dasharray="3 2" d="M10 2A7 7 0 0 1 10 16"/>',
  v25: '<path fill="none" stroke="#3a3a3a" d="M-.500 -.500H18.500V18.500H-.500Z"/><path fill="#3d5052" d="M2 2H10V10H2Z"/><path fill="#40595c" d="M7 7H16V16H7Z"/>',
  v26: '<path class="T" stroke-dasharray="2.500 1.500" d="M1 1.500H12V11H1Z"/>' + cursor(8, 4, .9),
  v27: '<path class="g" d="M6 1H17V11H6Z"/><path class="g" stroke="#3a3a3a" d="M1 6H12V17H1Z"/><path fill="#3a3a3a" d="M6 6H12V11H6Z"/><path class="g" d="M8 8h2v2h-2z"/>',
  v28: '<path class="G" d="M6 1.500H16.500V11H13"/><path class="g" d="M1 6H12V17H1Z"/>',
  v29: '<path class="G" d="M1.500 1.500H16.500V16.500H1.500Z"/><path class="G thin" d="M5 5L13 13M4 8L7 4"/>',
  v30: '<circle cx="9" cy="9" r="5.500" fill="none" stroke="#bdbdbd" stroke-width="5"/><path class="D thin" d="M9 1L12 8M17 6L10 10.500M15 15L8 11M7 17L6 9M1 12L8 7M2 4L9 7"/>',
  v31: '<path class="g" d="M9 1H17V17H9V14A5 5 0 0 0 9 4Z"/><circle cx="8" cy="9" r="5.500" class="G" stroke-dasharray="2 1.500"/>',
};

// Shelf icons, 26px grid.
const S = 'stroke="#444" stroke-width="1.300"';
const check = (x, y) => { let p = `<path class="d" d="M${x - 1} ${y - 1}h11v11h-11z"/>`; for (let r = 0; r < 4; r++) for (let c = 0; c < 4; c++) if ((r + c) % 2 === 0) p += `<path class="g" d="M${x + c * 2.4} ${y + r * 2.400}h2.400v2.400h-2.400z"/>`; return p + `<path fill="none" stroke="#bdbdbd" stroke-width=".6" d="M${x} ${y}h9.600v9.600h-9.600z"/>`; };
const gridSq = (x, y, s, n, c) => { let p = '', k = s / n; for (let r = 0; r < n; r++) for (let q = 0; q < n; q++) p += `<path class="${c}" d="M${x + q * k} ${y + r * k}h${k - 1}v${k - 1}h${1 - k}z"/>`; return p; };
const rhomb = (x, y, c) => `<path class="${c}" ${S} d="M${x - 7} ${y}l7 -4.500l7 4.500l-7 4.500z"/>`;
const node = (x, y, c) => `<path class="${c}" style="fill:#444;stroke-width:1" d="M${x - 1.500} ${y - 1.500}h3v3h-3z"/>`;
const spin = '<path class="G" style="stroke-width:2.200" d="M14 11C11 6 14 1 18 2M22 3C27 6 26 12 21 13"/><path class="g" d="M17 -1L21 2L16 5ZM22 16L18 12.500L23 10Z"/>';
const SHELF = {
  sphere: `<ellipse cx="13" cy="13" rx="12" ry="13" class="o"/><path class="D" d="M2 9C9 12 17 12 24 9M2 17C9 20 17 20 24 17M8 2C4 9 4 17 8 24M18 2C22 9 22 17 18 24M13 11V25M4 5C10 8 16 8 22 5"/>`,
  cube: `<path class="o" d="M13 0L24 5.500V20L13 26L2 20V5.500Z"/><path class="D" d="M2 6L13 12L24 6M13 12V26M7.500 3L18.500 9V23M18.500 3L7.500 9V23M2 13L13 19L24 13"/>`,
  cyl: `<path class="o" d="M3 4C3 -1 23 -1 23 4V22C23 27 3 27 3 22Z"/><path class="D" d="M3 5C3 10 23 10 23 5M3 13C3 17 23 17 23 13M3 19C5 23 21 23 23 19M9 8V25M17 8V25M7 2L19 8M19 2L7 8"/>`,
  cone: `<path class="o" d="M13 0L23 21C22 27 4 27 3 21Z"/><path class="D" d="M13 1L12 26M13 3L18 19M8 13C10 15 16 15 18 13M5 19C9 22 17 22 21 19"/>`,
  torus: `<path fill="none" stroke="#db9454" stroke-width="6.500" d="M7 4C13 1 22 9 20 20C17 27 6 18 5 8Z"/><path class="D" d="M7 1L10 8M16 2L15 9M24 12L18 13M22 25L17 19M12 25L13 18M2 15L8 13"/>`,
  plane: `<path class="o" d="M13 1L25 13L13 25L1 13Z"/><path class="D" d="M7 7L19 19M19 7L7 19"/>`,
  disc: `<ellipse cx="13" cy="13" rx="11" ry="8" class="o"/><path class="D" d="M1 13H25M6 6L20 20M20 6L6 20"/>`,
  plat: `<path class="o" d="M13 0L24 5V19L13 26L2 19V5Z"/><path class="D" d="M13 0L6 17H20ZM2 5L13 3L24 5M2 19L6 17L13 26L20 17L24 19M6 17L2 6M20 17L24 6"/><path class="w" d="M26 20V26H20Z"/>`,
  star: `<path class="o" d="M13 0C14 9 17 12 26 13C17 14 14 17 13 26C12 17 9 14 0 13C9 12 12 9 13 0Z"/><path class="w" d="M26 20V26H20Z"/>`,
  helix: `<path fill="none" stroke="#db9454" stroke-width="3.400" stroke-linecap="round" d="M20 2C12 0 4 3 4 5.500C5 9 22 8 22 12M22 12C20 15 4 12 3 16C4 19 21 18 22 24"/><path class="O" d="M22 12C16 9 5 12 4 15M5 23C4 18 12 17 18 18"/><path class="D" d="M10 3.500L9 9.500M16 6.500L15 11M10 12L9 16M16 15L15 20"/>`,
  type: '<path class="o" d="M2 0H24V8H22C21 4 19 3 16 3V21C16 23 17 24 20 24V26H6V24C9 24 10 23 10 21V3C7 3 5 4 4 8H2Z"/>',
  content: '<path class="g" d="M0 0H26V4H0Z"/><path class="t" d="M0 5H26V26H0Z"/><path class="d" d="M2 1h2v2H2zM5 1h2v2H5zM8 1h2v2H8z"/>' + [2.5, 10, 17.5].map(x => [8.500, 17].map(y => `<path stroke="#333" fill="#49a8b4" stroke-width="1.500" d="M${x} ${y}h5.500v5.500h-5.500z"/>`).join('')).join(''),
  locator: '<path class="T" d="M13 0V26M1 22L13 16L25 22"/><path class="t" d="M0 24L2 18L6 23ZM26 24L24 18L20 23Z"/><circle cx="13" cy="16" r="8" class="G"/><circle cx="13" cy="16" r="2.500" class="g"/>',
  delhist: '<circle cx="8" cy="7" r="7" class="t"/><path class="D" d="M8 3V8H12"/><path class="T" stroke-dasharray="4 2" d="M8 11H25M8 16H25M8 21H18"/><path class="G thick" d="M18 18L25 25M25 18L18 25"/>',
  snow: '<path class="G" style="stroke-width:2" d="M13 0V26M2 6L24 20M24 6L2 20M9 1L13 5L17 1M9 25L13 21L17 25M1 11L6 9L5 4M25 11L20 9L21 4M1 15L6 17L5 22M25 15L20 17L21 22"/>',
  boolean: `<ellipse cx="13" cy="13" rx="12" ry="12.500" class="G"/><path class="o" ${S} d="M13 12L23 17L13 22L3 17Z"/><path class="o" ${S} d="M13 5L23 10L13 15L3 10Z"/>`,
  combine: '<path class="g" d="M5 1H14V11H5ZM15 1H24V11H15ZM15 12H24V23H15Z"/><path class="o" d="M2 15H12V25H2Z"/>',
  mirror: `<path class="o" d="M5 3L10 6V20L5 24L0 20V6ZM21 3L26 6V20L21 24L16 20V6Z"/><path class="D" d="M0 6L5 9L10 6M5 9V24M16 6L21 9L26 6M21 9V24"/><path class="G" stroke-dasharray="4 2" d="M13 0V26"/>`,
  smooth: gridSq(1, 9, 17, 2, 'g') + '<path class="d" d="M8 0H26V17H8Z"/>' + gridSq(9, 1, 16, 4, 'o'),
  reduce: gridSq(1, 9, 16, 4, 'g') + '<path class="d" d="M8 0H26V17H8Z"/>' + gridSq(9, 1, 16, 2, 'o'),
  rot1: '<path class="o" d="M1 8H17V25H1Z"/><path class="D" d="M1 8L17 25"/><path class="d" d="M12 0H26V15H12Z"/>' + spin,
  rot2: gridSq(1, 8, 17, 2, 'o') + '<path class="d" d="M12 0H26V15H12Z"/>' + spin,
  extrude: `<path class="g" ${S} d="M8 18L18 12L26 19L16 26Z"/><path class="D" d="M13 15L21 23M12 21L21 15"/><path class="o" ${S} d="M2 4L8 0L14 4V20L8 25L2 20Z"/><path class="D" d="M2 4L8 8L14 4M8 8V25"/>`,
  bridge: rhomb(6, 3.500, 'g') + '<path class="O" d="M8 9L14 5L20 9L14 13Z"/>' + rhomb(6, 13, 'g') + rhomb(22, 13, 'g') + rhomb(14, 18, 'o') + rhomb(21, 23, 'g'),
  bevel: `<path class="o" d="M13 0L23 5L13 10L3 5ZM1 10L11 15V26L1 20ZM25 10L15 15V26L25 20Z"/><path class="g" d="M1 6L12 12V14L1 8.500ZM25 6L14 12V14L25 8.500ZM12 15H14V26H12Z"/>`,
  merge: `<path class="g" d="M3 10H18V24H5V20H3Z"/><path class="D" d="M11 10V24M4 17H18"/><path class="o" ${S} d="M12 0H26V14L18 13L11 8Z"/><path class="D" d="M19 0V12M12 7H26"/>` + node(2, 18, 'G') + node(2, 25, 'G') + node(10, 25, 'G'),
  circ: '<ellipse cx="13" cy="13" rx="12" ry="12.500" class="o"/><ellipse cx="13" cy="13" rx="9" ry="9" class="D"/><path class="D" d="M1 13H25M13 0V26M5 4L21 22M21 4L5 22"/><circle cx="13" cy="13" r="3" class="o"/>',
  flip: '<path class="g" d="M12 0H26V16H12Z"/><path class="D" d="M26 0L12 16"/><path class="o" stroke="#444" d="M1 10H17V26H1Z"/><path class="D" d="M1 10L17 26"/>',
  dup: `<path class="g" ${S} d="M12 14L19 9L27 14L17 22L9 17Z"/><path class="D" d="M14 12L23 18M22 11L13 19"/><path class="o" ${S} d="M0 15L5 12L13 17L8 20Z"/><path class="o" ${S} d="M1 10L9 5L16 10L8 15Z"/><path class="D" d="M5 7.500L12 12.500"/>`,
  poke: '<path class="G" d="M2 2H24V24H2Z"/><path class="O" d="M5 5L21 21M21 5L5 21"/><path class="O" d="M10.500 10.500h5v5h-5z" style="fill:#444"/>' + [[2, 2], [24, 2], [2, 24], [24, 24]].map(p => `<path d="M${p[0] - 1.700} ${p[1] - 1.700}h3.400v3.400h-3.400z" fill="#444" stroke="#bdbdbd"/>`).join(''),
  sphproj: gridSq(1, 11, 15, 3, 'g') + '<circle cx="17" cy="9" r="9.500" class="d"/><circle cx="17" cy="9" r="8.500" class="o"/><path class="D" d="M8 9H26M17 0V18M10 5H24M10 13H24M13 1V17M21 1V17"/>',
  cut: '<path class="O" d="M2 25V7L19 2"/><path fill="#444" stroke="#db9454" d="M.500 5.500h4v4h-4zM17 0h4v4h-4zM.500 22h4v4h-4z"/><path class="g" d="M27 2L17 14L12 12L24 1ZM12 13L16 15L3 25Z"/>',
  loop: '<path class="G" d="M2 2V24M24 2V24M2 2H24M2 24H24" /><path class="O" d="M13 2V24"/><path fill="#444" stroke="#bdbdbd" d="M.5 1h3v3h-3zM22.500 1h3v3h-3zM.5 22h3v3h-3zM22.500 22h3v3h-3z"/><path fill="#444" stroke="#db9454" stroke-width="1.500" d="M10.500 0h5v5h-5zM10.500 21h5v5h-5z"/>',
  quad: '<path class="G" stroke-dasharray="4 2" d="M2 3H12V13H2Z"/><path fill="#444" stroke="#bdbdbd" d="M.5 1h3v3h-3zM10.500 1h3v3h-3zM.5 11h3v3h-3z"/><path class="o" d="M0 20h4v4H0zM9 22h3v3H9z"/><path class="g" d="M24 4L27 7L14 22L9 24L11 19Z"/>',
  uv1: '<path class="n" d="M1 1H24V25H1Z"/>' + check(16, 16),
  uv2: '<path class="n" d="M1 3C8 8 17 8 24 3V25H8C4 25 2 22 1 17Z"/>' + check(17, 16),
  uv3: '<path class="n" d="M3 4C9 9 18 8 23 3C26 10 24 17 22 24H8C2 20 0 10 3 4Z"/>' + check(17, 16),
  uv4: '<path class="n" d="M13 0L24 6L13 12L2 6ZM0 8L11 14V26L1 20ZM25 8L15 13V26L25 20Z"/>' + check(17, 16),
  uv5: '<path fill="none" stroke="#60b08c" stroke-width="7" d="M4 26C4 13 12 19 17 13C20 9 19 5 20 1"/><path class="D" d="M4 26C4 13 12 19 17 13C20 9 19 5 20 1"/>' + check(17, 16),
  uv6: '<path class="g" d="M0 0H26V5H0Z"/><path class="n" d="M0 6H26V26H0Z"/><path class="d" d="M2 1h2v2H2zM5 1h2v2H5zM8 1h2v2H8z"/><g transform="translate(-5 -5) scale(1.300)">' + check(9, 10) + '</g>',
  uv7: '<path class="N" style="stroke-width:3.500" d="M3 8L13 14L23 8M3 22L13 14L23 22"/><path class="n" d="M-1 5L7 5L1 12ZM27 5L19 5L25 12ZM-1 25V18L6 25ZM27 25V18L20 25Z"/>' + check(8, 3),
  uv8: '<path class="N" d="M6 0C16 2 24 -2 27 4M2 6C-2 22 4 26 10 25"/><path class="g" d="M24 0L28 3L4 26L1 24ZM1 1L4 0L16 15L24 26L12 17Z"/>',
};

// Tool box icons, 36px grid.
const TOOLS = {
  tsel: '<path class="g" d="M13 4V29L18 24L22 31L26 29L22 22H30Z" transform="translate(1 1) scale(.95)"/>',
  tlasso: '<path class="T" style="stroke-width:2.200" stroke-dasharray="5 2.500" d="M8 24C2 18 20 0 26 4C30 8 22 18 16 22"/><path class="g" stroke="#444" d="M17 10V28L21 24L24 30L28 28.500L25 23H31Z"/>',
  tpaint: '<path class="T" style="stroke-width:2.200" stroke-dasharray="5 2.500" d="M14 12C6 8 2 14 12 25C18 32 30 32 26 22"/><path class="g" stroke="#444" d="M30 5L32 7L24 18L20 15ZM19 16L24 20C21 24 17 23 11 24C15 22 15 18 19 16Z"/>',
  tmove: '<path class="g" stroke="#333" d="M11.500 12H25V25.500H11.500Z"/><path class="t" stroke="#2d4a58" d="M18 3L22 8.500H14ZM18 33L22 28.500H14ZM3 18.500L8.500 14V23ZM33 18.500L27.500 14V23Z"/>',
  trot: '<path class="T" style="stroke-width:2" d="M17 32A13.500 13.500 0 1 1 30 17"/><path class="t" d="M26 17H34L30 23Z"/><path class="g" d="M17 10L26 19L17 27L8 19Z"/>',
  tscale: '<path class="T" style="stroke-width:1.600" stroke-dasharray="5 2" d="M6.500 5.500H30.500V29.500H6.500Z"/><path class="T" d="M15 15H20.500V21"/><path class="d" d="M5 17H19V31H5Z"/><path class="g" d="M6 18.500H17V30H6Z"/>',
  tman: '<path class="G" stroke-dasharray="3 2" d="M17 10V18M15 23L6 29M20 23L29 29"/><path class="t" d="M17 5L20 12H15ZM2 31L6 25L9 30ZM32 31L28 25L24 30Z"/><path class="T" d="M14 17.500H20V23.500H14Z"/><path class="G" d="M23 7H33M23 11H33"/><path class="g" d="M28 5.500h3v3h-3zM25 9.500h3v3h-3z"/>',
  lay1: '<path class="g" d="M4 4H32V32H4Z"/><path class="D" d="M6.500 6.500H29.500V29.500H6.500Z"/><path class="d" d="M18 11L22 14L18 17L14 14ZM13 15L17 18L13 21L9 18ZM23 15L27 18L23 21L19 18ZM18 19L22 22L18 25L14 22Z"/>',
  lay4: '<path class="G" d="M4.700 4.700H16.300V16.300H4.700ZM4.700 19.700H16.300V31.300H4.700ZM19.700 19.700H31.300V31.300H19.700ZM10.500 7V14M7 10.500H14M10.500 22V29M7 25.500H14M25.500 22V29M22 25.500H29"/><path class="g" d="M19 4H32V17H19Z"/><path class="d" d="M25.500 7.500L29.500 10.500L25.500 13.500L21.500 10.500Z"/>',
  lay2: '<path class="G" d="M4.700 4.700H16.300V31.300H4.700ZM10.500 14V21M7 17.500H14"/><path class="g" d="M19 4H32V32H19Z"/><path class="d" d="M25.500 14.500L29.500 18L25.500 21.500L21.500 18Z"/>',
  layo: '<path fill="#5285a6" stroke="#ccc" stroke-width="2" d="M5 5H31V31H5Z"/><path fill="none" stroke="#243a49" d="M3.500 3.500H32.500V32.500H3.500ZM7 7H29V29H7ZM10.500 9V27H16M10.500 14.500H16M10.500 20.500H16"/><path stroke="#ddd" stroke-width="1.600" d="M10 9.500H24M16 14.500H28M16 20.500H25M16 26H27"/><path fill="#ddd" stroke="#243a49" d="M8.500 7.500h4v4h-4zM14.500 12.500h4v4h-4zM14.500 18.500h4v4h-4zM14.500 24h4v4h-4z"/>',
  tsearch: '<circle cx="15.500" cy="15.500" r="8" class="G" style="stroke-width:2.400"/><path class="G" style="stroke-width:3.600" d="M21 21L28 28"/>',
  maya: '<path fill="#128a92" d="M2 3H14V32H2Z"/><path fill="#0a9fa6" d="M22 3H34V32H22Z"/><path fill="#2fb5bd" d="M2 31L11 14L13 26L3 32Z"/><path fill="#8ec7cc" d="M2 3H12L22 27H15Z"/><path fill="#5aabb3" d="M25 12L22 27H15L18 20Z"/><path fill="#17c0bb" d="M34 3L22 8L20 22L28 14Z"/>',
};

document.querySelectorAll('i[data-icon]').forEach(el => {
  const n = el.dataset.icon;
  const [size, body] = SMALL[n] ? [18, SMALL[n]] : SHELF[n] ? [26, SHELF[n]] : [36, TOOLS[n]];
  const fit = el.closest('.vbar') ? 15 : el.closest('.app-icon') ? 16 : el.closest('.io') ? 17 : el.closest('.freeze') ? 16 : size;
  el.innerHTML = `<svg viewBox="0 0 ${size} ${size}" width="${fit}" height="${fit}" overflow="visible">${body}</svg>`;
});

// Outliner rows
const items = [['House1', 'xform', 1], ['House2', 'mesh', 1], ['Semi_Circle_Window', 'mesh'], ['Rectangle_Window', 'mesh'], ['Blades', 'mesh'], ['pCube1', 'xform', 1], ['imagePlane1', 'image']];
for (let i = 2; i <= 24; i++) items.push(['pCube' + i, 'xform', 1]);
for (let i = 25; i <= 29; i++) items.push(['pCube' + i, 'mesh']);
document.getElementById('rows').innerHTML = items.map(([name, icon, exp]) =>
  `<div class="row${name === 'pCube25' ? ' sel' : ''}"><svg viewBox="0 0 18 18" width="10" height="10">${exp ? SMALL.plus : ''}</svg><svg viewBox="0 0 18 18" width="17" height="17" overflow="visible">${SMALL[icon]}</svg><span class="name">${name}</span></div>`).join('');

// Time ruler
let ticks = '';
for (let f = 5; f <= 120; f += 5) ticks += `<span class="tick${f === 120 ? ' last' : ''}">${f}</span>`;
document.getElementById('ruler').innerHTML = ticks + '<span class="now">120</span>';

// Viewport scene
const CY = '#62d9ff', MG = '#c800c8', YE = '#ffff7f', NV = '#000064';
let out = '', late = '';
const line = (x1, y1, x2, y2, c = CY, w = 1) => { out += `<line x1="${x1}" y1="${y1}" x2="${x2}" y2="${y2}" stroke="${c}" stroke-width="${w}"/>`; };
const poly = (pts, c = CY, extra = '') => { out += `<polyline points="${pts.map(p => p.join()).join(' ')}" fill="none" stroke="${c}" ${extra}/>`; };
// vertices are collected apart so that they stay above every edge
const dot = (x, y, c = MG, s = 3, h = s) => { late += `<rect x="${Math.round(x - s / 2)}" y="${Math.round(y - h / 2)}" width="${s}" height="${h}" fill="${c}"/>`; };
const X = v => 660 + v / 3, Y = v => 500 + v / 3;

// grid
[414.5, 537.5, 661.5, 784.5, 907.5, 1031.5, 1278.5, 1401.5].forEach(x => line(x, 191, x, 925, '#404040'));
[212.5, 335.5, 458.5, 582.5, 705.5].forEach(y => line(316, y, 1435, y, '#404040'));
line(1155, 191, 1155, 925, '#404040', 2); line(316, 829, 1435, 829, '#404040', 2);

// rope under the seat
const rope = [[92, 573, 148, 516], [152, 503, 235, 486], [235, 483, 316, 478], [320, 477, 400, 480], [403, 481, 483, 486], [486, 487, 566, 499], [568, 500, 648, 507], [651, 508, 731, 508], [734, 508, 814, 504], [817, 502, 896, 487], [899, 481, 978, 461], [980, 458, 1058, 440]];
rope.forEach(([a, b, c, d]) => {
  const L = Math.hypot(c - a, d - b), ux = (c - a) / L, uy = (d - b) / L, h = 21;
  const P = (s, t) => [X(a + ux * s * L - uy * t * h).toFixed(1), Y(b + uy * s * L + ux * t * h).toFixed(1)];
  poly([P(0, -.6), P(.1, -1), P(.9, -1), P(1, -.6), P(1, .6), P(.9, 1), P(.1, 1), P(0, .6), P(0, -.6)], NV);
  poly([P(.05, -.8), P(.3, -.5), P(.7, .5), P(.95, .8)], NV); poly([P(.05, .8), P(.3, .5), P(.7, -.5), P(.95, -.8)], NV);
  poly([P(0, -.5), P(.5, .1), P(1, -.5)], NV); poly([P(0, .5), P(.5, -.1), P(1, .5)], NV);
  poly([P(.2, -.95), P(.5, 0), P(.85, -.7)], NV); poly([P(.15, .7), P(.5, 0), P(.8, .95)], NV);
});

// back post
line(982.500, 296, 982.500, 577, CY, 3); line(982.500, 577, 982.500, 782); line(983.500, 782, 983.500, 813);
[986.500, 991.500, 1002.500, 1008.500, 1019.500].forEach(x => line(x, x === 1008.500 ? 322 : 296, x, 813));
line(1009.500, 290, 1009.500, 322);
line(998, 296, 998, 590, CY, 2); line(997.500, 590, 997.500, 813);
line(1016, 290, 1016, 350, CY, 2); line(1014.500, 350, 1014.500, 813); line(1016.500, 350, 1016.500, 590);
line(1023, 345, 1023, 500, CY, 2); line(1022.500, 500, 1022.500, 813); line(1023.500, 500, 1023.500, 768);
poly([[1026, 292], [1025, 328], [1024, 345], [1024, 500]], CY, 'stroke-width="2"'); poly([[1022, 296], [1021, 335], [1020.500, 395]]);
[340.500, 342.500, 536.500, 590.500].forEach(y => { line(998, y, 1016, y); dot(998, y); dot(1016.500, y); });
[360, 545].forEach(y => {
  const p = [[982, y + 2], [986.500, y + 1], [991.500, y], [998, y - 1], [1002.500, y - 1.500], [1008.500, y - 1], [1015, y], [1019.500, y + 1], [1024, y + 1]];
  poly(p); p.forEach(q => dot(...q)); dot(982, y, MG, 3, 6); dot(1024.500, y, MG, 3, 6);
});
dot(982.500, 681.500); dot(1023.500, 681.500);
// headrest
const headRows = [242, 251, 260, 268, 275, 284, 291], headR = [1028, 1031, 1033, 1034, 1032.500, 1030, 1025];
const headCol = [982, 986.500, 991.500, 997.500, 1002.500, 1009.500];
headRows.forEach((y, i) => {
  const p = headCol.map((x, k) => [x, y + [3, 1.500, 0, -1, -1.500, -1][k]]);
  p.push([1017.500 + (i < 4 ? i * .6 : (6 - i)), y], [headR[i] - 6, y + 1.500], [headR[i] - 1, y + 2]);
  poly(p); p.forEach(q => dot(...q)); dot(981.500, y + 2, MG, 3, 6); dot(headR[i], y + 1, MG, 3, 6); dot(headR[i] - 3, y + 4, MG, 3, 3);
});
headCol.forEach((x, k) => { const t = [231, 228, 227, 225, 224.500, 225.500][k]; line(x, t, x, 296, CY, k ? 1 : 2); dot(x, t + 4, MG, 3, 9); });
poly([[1014, 228], [1016, 243], [1019, 265], [1017, 290]]); poly([[1020, 231], [1025, 248], [1028, 268], [1023, 294]]);
poly([[982, 232], [992, 227], [1003, 225], [1014, 228], [1021, 232], [1028, 243], [1032, 260], [1034, 268], [1032, 280], [1027, 296]]);
[229, 232, 235].forEach(y => poly([[984, y + 3], [995, y], [1008, y], [1024, y + 4]]));
dot(984.500, 234, MG, 6, 9); dot(1014.500, 231, MG, 3, 9); dot(1020, 233, MG, 6, 8); dot(1023.500, 238, MG, 4, 7); dot(1023, 295, MG, 7, 3); dot(984, 295, MG, 8, 3);
line(998, 288.500, 1015, 288.500); line(998, 291.500, 1015, 291.500);

// armrest
const cols = [127, 178, 226, 277, 325, 376, 424, 472, 523, 571, 622, 670, 718, 769, 817, 868, 916, 952, 965];
const dip = [0, 2, 5, 9, 13, 17, 19, 21, 19, 18, 14, 9, 5, 2, 0, 0, 0, 0, 0];
const rows = [95, 99, 109, 124, 140, 157, 175, 193, 208, 214, 220];
const ry = (r, c) => rows[r] + dip[c] * Math.max(0, 1 - (rows[r] - 95) / 110);
rows.forEach((_, r) => poly(cols.map((x, c) => [X(x), Y(ry(r, c))]).map(p => [p[0].toFixed(1), p[1].toFixed(1)])));
cols.forEach((x, c) => {
  line(X(x), Y(ry(0, c)), X(x), Y(222));
  rows.forEach((_, r) => dot(X(x), Y(ry(r, c))));
  dot(X(x), Y(rows[0] + dip[c] + 8), MG, 3, 9); dot(X(x), Y(213), MG, 3, 8);
});
[[100, 0], [86, 1], [72, 3], [62, 5], [54, 8]].forEach(([x, k], n) => {
  const pts = rows.slice(1).map(y => { const u = (y - 157) / 62; return [X(x + (n < 3 ? 0 : 1) * k * u * u * 1.500), Y(157 + (y - 157) * (1 - n * .05))]; });
  poly(pts); if (n !== 2) pts.forEach(p => dot(...p));
});
rows.slice(2, 9).forEach((y, i) => { const e = [70, 60, 56, 52, 56, 60, 70][i]; line(X(e), Y(y), X(127), Y(y)); dot(X(e), Y(y)); });
[97, 216].forEach(y => { line(X(80), Y(y), X(127), Y(y)); dot(X(95), Y(y), MG, 5, 4); dot(X(74), Y(y + (y < 150 ? 5 : -5)), MG, 4, 4); });

// front leg
const legRow = [[220, 154], [274, 154], [322, 158], [355, 165], [382, 175], [409, 183], [436, 186], [463, 183], [490, 174], [517, 165], [553, 156], [598, 154], [720, 154], [774, 154], [831, 154], [885, 154], [924, 155], [938, 157]];
const legCol = [155, 160, 166, 181, 199, 217, 235, 253, 265, 274, 280];
const lx = (c, l) => { const u = (277 - c) / 123; return c + (l - 154) * Math.max(0, u) ** .9; };
legCol.forEach((c, k) => poly(legRow.map(([y, l]) => [X(lx(c, l)).toFixed(1), Y(y).toFixed(1)]), CY, k > 8 ? 'stroke-width="2"' : ''));
legRow.forEach(([y, l], i) => {
  const c = i > 11 ? YE : MG, s = i > 11 ? 4 : 3;
  line(X(l), Y(y), X(282), Y(y));
  legCol.forEach(k => { if (s === 3 || k !== 160) dot(X(lx(k, l)), Y(y), c, s); });
});
dot(X(156), Y(917), YE, 4, 6); dot(X(279), Y(917), YE, 4, 6);

// lower rail
[760, 766, 787, 808, 814].forEach(y => line(X(275), Y(y), X(970), Y(y)));
[363, 623, 882].forEach(x => { line(X(x), Y(760), X(x), Y(814)); dot(X(x), Y(763), YE, 4, 7); dot(X(x), Y(786), YE, 4); dot(X(x), Y(810), YE, 4, 6); });
dot(X(276), Y(763), YE, 4, 7); dot(X(274), Y(782), YE, 5, 8); dot(X(275), Y(807), YE, 5, 8);
dot(X(970), Y(763), YE, 5, 9); dot(X(970), Y(786), YE, 4); dot(X(969), Y(807), YE, 4, 8);
poly([[982, 752], [991, 751.500], [1005, 751], [1024, 752]]);
[966, 978, 993, 1011, 1029, 1047, 1065, 1076, 1089].forEach((x, i) => dot(X(x), Y(i > 2 && i < 6 ? 753 : 755), YE, 4));
line(X(970), Y(939), X(1090), Y(939));
[972, 982, 993, 1011, 1029, 1047, 1065, 1076, 1086].forEach(x => dot(X(x), Y(939), YE, 4));
out += late;

// move manipulator
line(867.500, 709, 867.500, 751, YE); out += '<polygon points="862,732 867.500,712 872,732" fill="#ffff55"/>';
out += '<rect x="893.500" y="734.500" width="16" height="16" fill="rgba(240,60,60,.6)" stroke="#e02626"/>';
out += `<rect x="857.500" y="766.500" width="20" height="20" fill="none" stroke="${CY}"/><rect x="867" y="776" width="1" height="1" fill="${CY}"/>`;
line(887, 776.500, 913, 776.500, '#0000e6'); out += '<polygon points="912,771.500 935,776.500 912,781.500" fill="#0000ff"/>';

// axis gizmo
line(342.500, 884, 342.500, 898, '#00c800'); line(342, 897.500, 353, 897.500, '#0000e6');
out += '<text x="338" y="882" font-size="9" font-weight="700" fill="#00c800">y</text><text x="355" y="898" font-size="9" font-weight="700" fill="#0000e6">z</text>';
const scene = document.getElementById('scene');
scene.setAttribute('shape-rendering', 'crispEdges');
scene.innerHTML = out;
```
